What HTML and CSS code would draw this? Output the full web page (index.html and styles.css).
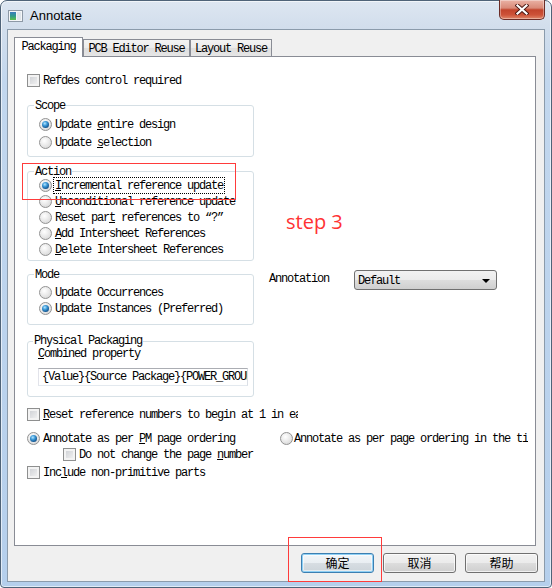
FILE: index.html
```html
<!DOCTYPE html>
<html>
<head>
<meta charset="utf-8">
<title>Annotate</title>
<link rel="stylesheet" href="styles.css">
</head>
<body>
<div class="window">
  <div class="titlebar">
    <svg class="app-icon" viewBox="0 0 15 12" width="15" height="12">
      <defs>
        <linearGradient id="ig" x1="0" y1="0" x2="0" y2="1">
          <stop offset="0" stop-color="#3a7bbf"/>
          <stop offset="0.5" stop-color="#2f9a8a"/>
          <stop offset="1" stop-color="#5cbf4a"/>
        </linearGradient>
      </defs>
      <rect x="0.5" y="0.5" width="14" height="11" fill="#f4f6f8" stroke="#8d99a6"/>
      <rect x="2" y="2" width="6" height="8" fill="url(#ig)"/>
      <rect x="9" y="2" width="4" height="8" fill="#dfe5ea"/>
    </svg>
    <span class="title">Annotate</span>
    <div class="close">
      <svg viewBox="0 0 14 11" width="14" height="11">
        <path d="M2.5 1.5 L11.5 9.5 M11.5 1.5 L2.5 9.5" stroke="#4a1712" stroke-width="4" stroke-linecap="square" fill="none"/>
        <path d="M2.5 1.5 L11.5 9.5 M11.5 1.5 L2.5 9.5" stroke="#ffffff" stroke-width="2.2" stroke-linecap="square" fill="none"/>
      </svg>
    </div>
  </div>

  <div class="client">
    <div class="tabs">
      <div class="tab active">Packaging</div>
      <div class="tab t-pcb">PCB Editor Reuse</div>
      <div class="tab t-layout">Layout Reuse</div>
    </div>

    <div class="panel">
      <div class="row"><span class="cb"></span><span class="lbl">Refdes control required</span></div>

      <div class="columns">
        <div class="left">
          <fieldset class="group g-scope">
            <legend>Scope</legend>
            <div class="rows r18">
              <div class="row"><span class="rb on"></span><span class="lbl">Update <u>e</u>ntire design</span></div>
              <div class="row"><span class="rb"></span><span class="lbl">Update <u>s</u>election</span></div>
            </div>
          </fieldset>

          <fieldset class="group g-action">
            <legend>Action</legend>
            <div class="rows r16 shift-up">
              <div class="row"><span class="rb on"></span><span class="lbl focus"><u>I</u>ncremental reference update</span></div>
              <div class="row"><span class="rb"></span><span class="lbl"><u>U</u>nconditional reference update</span></div>
              <div class="row"><span class="rb"></span><span class="lbl">Reset par<u>t</u> references to “?”</span></div>
              <div class="row"><span class="rb"></span><span class="lbl"><u>A</u>dd Intersheet References</span></div>
              <div class="row"><span class="rb"></span><span class="lbl"><u>D</u>elete Intersheet References</span></div>
            </div>
          </fieldset>

          <fieldset class="group g-mode">
            <legend>Mode</legend>
            <div class="rows r16">
              <div class="row"><span class="rb"></span><span class="lbl">Update Occurrences</span></div>
              <div class="row"><span class="rb on"></span><span class="lbl">Update Instances (Preferred)</span></div>
            </div>
          </fieldset>

          <fieldset class="group g-phys">
            <legend>Physical Packaging</legend>
            <div class="combined"><u>C</u>ombined property</div>
            <div class="textbox"><span>{Value}{Source Package}{POWER_GROUP}</span></div>
          </fieldset>
        </div>

        <div class="right">
          <div class="step">step 3</div>
          <div class="annot-row">
            <span class="annot-label">Annotation</span>
            <div class="select">
              <span>Default</span>
              <svg class="arrow" viewBox="0 0 8 4" width="8" height="4"><polygon points="0,0 8,0 4,4" fill="#000"/></svg>
            </div>
          </div>
        </div>
      </div>

      <div class="row clip-reset"><span class="cb"></span><span class="lbl"><u>R</u>eset reference numbers to begin at 1 in each page</span></div>

      <div class="order-row">
        <div class="row order-left"><span class="rb on"></span><span class="lbl">Annotate as per <u>P</u>M page ordering</span></div>
        <div class="row order-right"><span class="rb"></span><span class="lbl">Annotate as per page ordering in the title block</span></div>
      </div>
      <div class="row indent"><span class="cb"></span><span class="lbl">Do not change the page <u>n</u>umber</span></div>
      <div class="row include"><span class="cb"></span><span class="lbl">Inc<u>l</u>ude non-primitive parts</span></div>
    </div>

    <div class="buttons">
      <div class="btn default">确定</div>
      <div class="btn">取消</div>
      <div class="btn">帮助</div>
    </div>
  </div>

  <div class="mark mark-action"></div>
  <div class="mark mark-ok"></div>
</div>
</body>
</html>
```

FILE: styles.css
```css
* { box-sizing: border-box; }
html, body { margin: 0; padding: 0; }
body {
  width: 552px;
  height: 588px;
  overflow: hidden;
  background: #ffffff;
  font-family: "Liberation Mono", "Courier New", monospace;
  font-size: 12px;
  letter-spacing: -1.2px;
  color: #000;
}
u { text-decoration: underline; text-underline-offset: 1px; }

.window {
  position: relative;
  width: 552px;
  height: 588px;
  padding: 0 6px 5px 6px;
  border: 1px solid #4f6378;
  border-radius: 7px 7px 4px 4px;
  background: linear-gradient(180deg, #dde6f1 0, #d2deec 26px, #c2d7ee 80px, #b5cfec 100%);
  box-shadow: inset 0 0 0 1px rgba(255,255,255,0.6);
  display: flex;
  flex-direction: column;
}

/* title bar */
.titlebar {
  height: 28px;
  flex: none;
  display: flex;
  align-items: center;
}
.app-icon { margin-left: 1px; margin-top: 1px; flex: none; }
.title {
  margin-left: 7px;
  font-family: "Liberation Sans", Arial, sans-serif;
  font-size: 13px;
  letter-spacing: 0;
  color: #000;
}
.close {
  margin-left: auto;
  align-self: flex-start;
  margin-top: -1px;
  width: 46px;
  height: 20px;
  border: 1px solid #6b2c26;
  border-top: none;
  border-radius: 0 0 5px 5px;
  background: linear-gradient(180deg, #eab2a5 0, #d98a78 42%, #c2442c 52%, #cd5238 78%, #e0876a 100%);
  box-shadow: inset 0 0 0 1px rgba(255,255,255,0.35);
  display: flex;
  align-items: center;
  justify-content: center;
}

/* client area */
.client {
  flex: 1;
  border: 1px solid #8b9bab;
  background: #f0f0f0;
  padding: 7px 6px 0 6px;
  display: flex;
  flex-direction: column;
}

.tabs {
  height: 19px;
  flex: none;
  display: flex;
  align-items: flex-end;
  position: relative;
  z-index: 1;
}
.tab {
  height: 17px;
  border: 1px solid #898c95;
  border-bottom: none;
  background: linear-gradient(180deg, #f3f3f3 0, #ebebeb 50%, #dedede 51%, #e6e6e6 100%);
  display: flex;
  align-items: center;
  justify-content: center;
  white-space: nowrap;
  line-height: 14px;
  padding-top: 2px;
}
.tab.active {
  height: 20px;
  width: 69px;
  margin-bottom: -1px;
  background: #ffffff;
  padding-top: 0;
  padding-bottom: 1px;
}
.t-pcb { width: 107px; }
.t-layout { width: 82px; }

.panel {
  flex: none;
  height: 490px;
  margin-right: 2px;
  border: 1px solid #898c95;
  background: #ffffff;
  padding: 15px 0 0 12px;
}

/* rows & controls */
.row {
  display: flex;
  align-items: center;
  height: 16px;
  white-space: nowrap;
  line-height: 14px;
}
.lbl { margin-left: 3px; padding-top: 2px; }
.focus { outline: 1px dotted #000; outline-offset: 0; padding: 1px 1px 0 1px; margin-left: 2px; }

.cb {
  flex: none;
  width: 13px;
  height: 13px;
  border: 1px solid #8e8f8f;
  background: linear-gradient(135deg, #c9ccd1 0, #e2e3e5 55%, #f7f7f7 100%);
  box-shadow: inset 0 0 0 2px #f3f3f3;
}
.rb {
  flex: none;
  width: 13px;
  height: 13px;
  border-radius: 50%;
  border: 1px solid #929292;
  background: radial-gradient(circle at 40% 35%, #ffffff 0, #ededed 40%, #cfcfcf 100%);
  display: flex;
  align-items: center;
  justify-content: center;
}
.rb.on::after {
  content: "";
  width: 7px;
  height: 7px;
  border-radius: 50%;
  background: radial-gradient(circle at 40% 35%, #b5e6ff 0, #3d9ad8 35%, #0f4f8a 75%, #0b3a66 100%);
}

/* columns */
.columns {
  display: flex;
  margin-top: 10px;
}
.left { width: 227px; flex: none; }
.right {
  margin-left: 15px;
  padding-top: 112px;
  display: flex;
  flex-direction: column;
}

.group {
  margin: 0;
  width: 227px;
  border: 1px solid #d5dfe5;
  border-radius: 3px;
  padding: 3px 4px 6px 11px;
  min-width: 0;
}
.group legend {
  padding: 1px 1px 0 1px;
  margin-left: -5px;
  line-height: 14px;
  height: 15px;
}
.rows { display: flex; flex-direction: column; }
.r18 { gap: 2px; }
.r16 { gap: 0; }

.g-action { margin-top: 7px; padding-top: 0; padding-bottom: 3px; }
.shift-up { margin-top: -2px; }
.g-mode { margin-top: 6px; padding-top: 2px; padding-bottom: 8px; }
.g-phys { margin-top: 9px; padding: 0 5px 10px 10px; }
.g-phys legend { height: 14px; line-height: 13px; }

.combined {
  margin-top: 0;
  line-height: 12px;
  height: 12px;
  white-space: nowrap;
}
.textbox {
  margin-top: 8px;
  width: 210px;
  height: 18px;
  border: 1px solid #abadb3;
  border-color: #abadb3 #dbdfe6 #e3e9ef #e2e3ea;
  background: #fff;
  overflow: hidden;
  white-space: nowrap;
  padding: 1px 0 0 3px;
  line-height: 15px;
}

.step {
  margin-left: 17px;
  font-family: "Open Sans", "Liberation Sans", sans-serif;
  font-size: 20px;
  letter-spacing: 0;
  line-height: 24px;
  height: 24px;
  color: #ff3333;
}
.annot-row {
  margin-top: 36px;
  display: flex;
  align-items: center;
  height: 20px;
}
.annot-label { width: 85px; flex: none; margin-top: -3px; }
.select {
  width: 143px;
  height: 20px;
  border: 1px solid #707070;
  border-radius: 3px;
  background: linear-gradient(180deg, #f2f2f2 0, #ebebeb 50%, #dddddd 51%, #cfcfcf 100%);
  display: flex;
  align-items: center;
  justify-content: space-between;
  padding: 1px 6px 0 3px;
  line-height: 14px;
}
.arrow { flex: none; }

.clip-reset { margin-top: 9px; width: 271px; overflow: hidden; }
.order-row { display: flex; margin-top: 8px; }
.order-left { width: 253px; flex: none; }
.order-right { width: 248px; overflow: hidden; }
.order-right .lbl { margin-left: 1px; }
.indent { margin-left: 36px; }
.include { margin-top: 2px; }

/* buttons */
.buttons {
  flex: none;
  display: flex;
  justify-content: flex-end;
  gap: 9px;
  padding-top: 7px;
}
.btn {
  width: 73px;
  height: 20px;
  border: 1px solid #707070;
  border-radius: 3px;
  background: linear-gradient(180deg, #f2f2f2 0, #ebebeb 50%, #dddddd 51%, #cfcfcf 100%);
  box-shadow: inset 0 0 0 1px rgba(255,255,255,0.7);
  display: flex;
  align-items: center;
  justify-content: center;
  font-family: "Noto Sans CJK SC", "Noto Sans CJK JP", sans-serif;
  font-size: 12px;
  letter-spacing: 0;
  line-height: 14px;
}
.btn.default {
  border-color: #3c7fb1;
  box-shadow: inset 0 0 0 1px #8fd0f5, inset 0 0 0 2px rgba(255,255,255,0.5);
  background: linear-gradient(180deg, #f2f6f9 0, #e9eef2 50%, #d7dde2 51%, #ccd4da 100%);
}

/* annotation marks drawn over the screenshot */
.mark {
  position: absolute;
  border: 1px solid #ff3b3b;
}
.mark-action { left: 21px; top: 162px; width: 214px; height: 37px; }
.mark-ok { left: 287px; top: 536px; width: 94px; height: 45px; }
```
